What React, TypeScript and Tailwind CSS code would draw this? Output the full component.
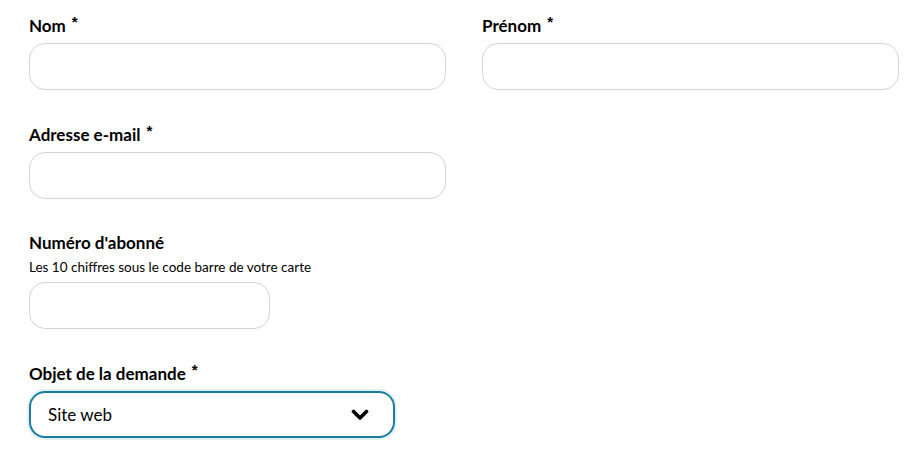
import React from 'react';

const font = { fontFamily: 'Lato, "Noto Sans", sans-serif' };

const Label = ({ text, required, hint }: { text: string; required?: boolean; hint?: string }) => (
  <div className="mb-[7px]">
    <div className="flex items-start text-[17px] font-bold leading-[20px] text-black">
      <span>{text}</span>
      {required && (
        <span
          className="relative -top-[4px] ml-[6px] text-[15px] leading-[20px]"
          style={{ fontFamily: '"Liberation Sans", Arial, sans-serif' }}
        >
          *
        </span>
      )}
    </div>
    {hint && <div className="mt-[6px] text-[13.5px] leading-[16px] text-black">{hint}</div>}
  </div>
);

const Input = ({ className = '' }: { className?: string }) => (
  <input
    type="text"
    className={`h-[47px] rounded-[16px] border border-[#d4d4d4] bg-white px-4 outline-none ${className}`}
  />
);

export default function App() {
  return (
    <div className="min-h-[456px] w-[908px] bg-white pl-[29px] pr-[9px] pt-[16px]" style={font}>
      <div className="grid grid-cols-2 gap-x-[36px]">
        <div>
          <Label text="Nom" required />
          <Input className="w-full" />
        </div>
        <div>
          <Label text="Prénom" required />
          <Input className="w-full" />
        </div>
      </div>

      <div className="mt-[35px] w-[417px]">
        <Label text="Adresse e-mail" required />
        <Input className="w-full" />
      </div>

      <div className="mt-[34px]">
        <Label text="Numéro d'abonné" hint="Les 10 chiffres sous le code barre de votre carte" />
        <Input className="w-[241px]" />
      </div>

      <div className="mt-[35px]">
        <Label text="Objet de la demande" required />
        <div className="flex h-[47px] w-[366px] items-center justify-between rounded-[16px] border-2 border-[#1a7d9e] bg-white pl-[17px] pr-[24px] shadow-[0_0_0_2px_#e3f1f7]">
          <span className="text-[17px] text-black">Site web</span>
          <svg width="18" height="12" viewBox="0 0 18 12" fill="none">
            <polyline points="2.5,2.5 9,9 15.5,2.5" stroke="#000" strokeWidth="3.6" strokeLinecap="round" strokeLinejoin="round" />
          </svg>
        </div>
      </div>
    </div>
  );
}
